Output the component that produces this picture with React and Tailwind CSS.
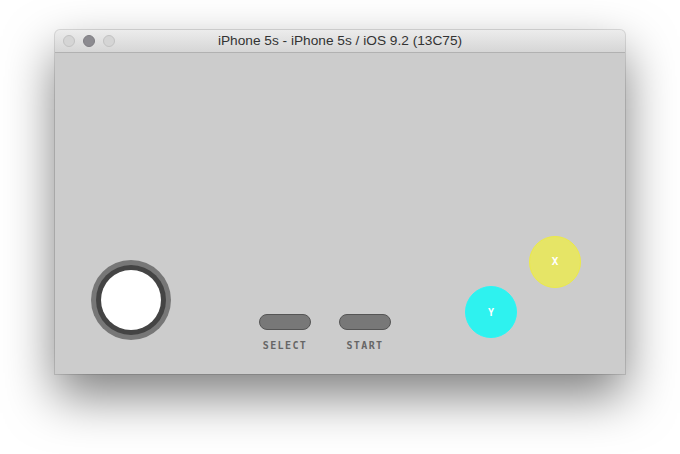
export default function App() {
  return (
    <div className="w-[680px] h-[454px] bg-white pt-[30px] pl-[55px] overflow-hidden">
      <div className="w-[570px] h-[344px] flex flex-col rounded-t-[5px] shadow-[0_22px_50px_rgba(0,0,0,0.5),0_0_0_1px_rgba(0,0,0,0.12)] bg-[#cccccc]">
        <div className="relative h-[23px] flex items-center rounded-t-[5px] bg-gradient-to-b from-[#ececec] to-[#d6d6d6] border-b border-[#b1b1b1]">
          <div className="flex items-center gap-[8px] pl-[8px]">
            <div className="w-[12px] h-[12px] rounded-full bg-[#d5d5d5] border border-[#c2c2c2]" />
            <div className="w-[12px] h-[12px] rounded-full bg-[#8c8b90] border border-[#7e7d82]" />
            <div className="w-[12px] h-[12px] rounded-full bg-[#d5d5d5] border border-[#c2c2c2]" />
          </div>
          <div className="absolute inset-0 flex items-center justify-center text-[13.7px] text-[#333333] font-['Liberation_Sans',sans-serif] pointer-events-none">
            iPhone 5s - iPhone 5s / iOS 9.2 (13C75)
          </div>
        </div>
        <div className="flex-1 flex items-end">
          <div className="ml-[36px] mb-[34px] w-[80px] h-[80px] rounded-full bg-[#777777] flex items-center justify-center">
            <div className="w-[70px] h-[70px] rounded-full bg-[#444444] flex items-center justify-center">
              <div className="w-[60px] h-[60px] rounded-full bg-white" />
            </div>
          </div>
          <div className="ml-[88px] mb-[23px] flex gap-[28px]">
            {["SELECT", "START"].map((l) => (
              <div key={l} className="flex flex-col items-center w-[52px]">
                <div className="w-[52px] h-[16px] rounded-full bg-[#787878] border-[1.5px] border-[#555555]" />
                <div className="mt-[11px] h-[10px] leading-[10px] text-[10px] font-bold tracking-[1.4px] text-[#666666] font-['DejaVu_Sans_Mono',monospace] whitespace-nowrap">
                  {l}
                </div>
              </div>
            ))}
          </div>
          <div className="ml-[74px] mb-[36px] w-[52px] h-[52px] rounded-full bg-[#2ef2ef] border-[1.5px] border-[#28f6f6] flex items-center justify-center text-white text-[10px] font-bold font-['DejaVu_Sans_Mono',monospace]">
            Y
          </div>
          <div className="ml-[12px] mb-[86px] w-[52px] h-[52px] rounded-full bg-[#e6e566] border-[1.5px] border-[#ecea48] flex items-center justify-center text-white text-[11px] font-bold font-['DejaVu_Sans_Mono',monospace]">
            X
          </div>
        </div>
      </div>
    </div>
  );
}
